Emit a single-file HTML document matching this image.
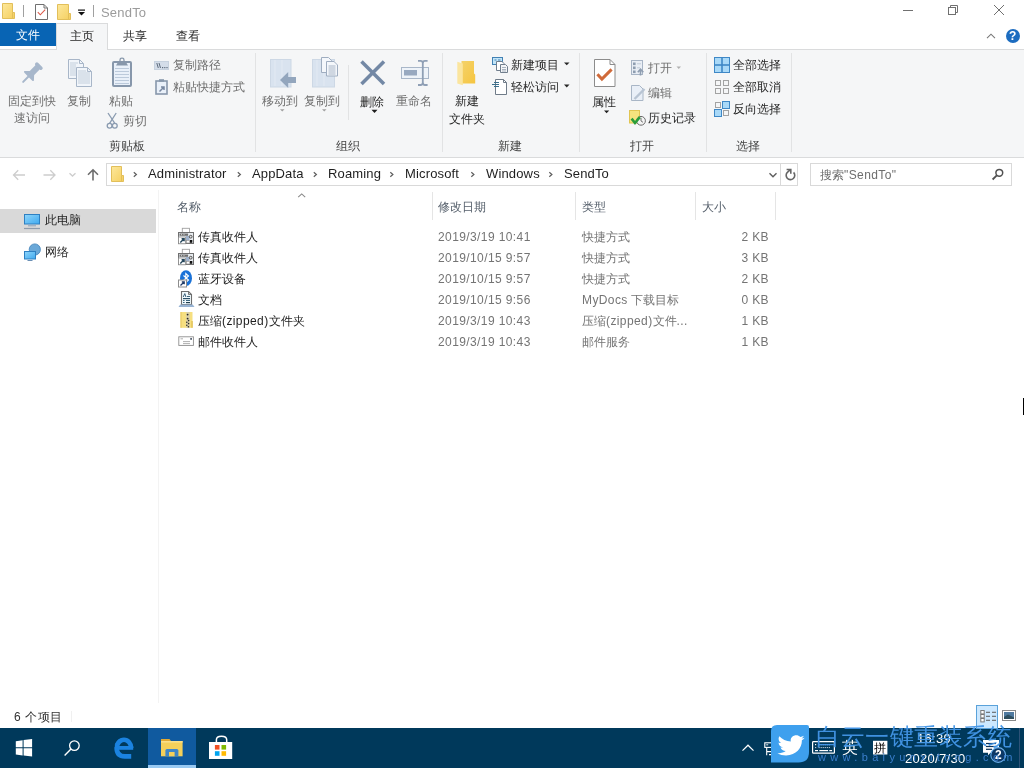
<!DOCTYPE html>
<html><head><meta charset="utf-8">
<style>
html,body{margin:0;padding:0}
body{width:1024px;height:768px;overflow:hidden;position:relative;background:#fff;font-family:"Liberation Sans",sans-serif;font-size:12px;color:#1e1e1e}
.a{position:absolute}
.t{position:absolute;white-space:nowrap;line-height:16px;height:16px}
.g{color:#747474}
.lat{letter-spacing:0.4px}
.g2{color:#6f6f6f}
.addr{font-size:13px;letter-spacing:0.15px;line-height:18px;height:18px}
.d2{color:#262626}
.gl{color:#454545}
svg{position:absolute;overflow:visible}
.t{will-change:transform}
</style></head><body>

<!-- title bar -->
<div class="a" style="left:0;top:0;width:1024px;height:23px;background:#fff"></div>
<div class="t" style="left:101px;top:4px;color:#9b9b9b;font-size:13px;letter-spacing:0.2px;line-height:18px;height:18px">SendTo</div>

<!-- tabs row -->
<div class="a" style="left:0;top:23px;width:56px;height:23px;background:#0864b4"></div>
<div class="t" style="left:16px;top:27px;color:#fff">文件</div>
<div class="t" style="left:123px;top:28px;color:#262626">共享</div>
<div class="t" style="left:176px;top:28px;color:#262626">查看</div>

<!-- ribbon -->
<div class="a" style="left:0;top:49px;width:1024px;height:107px;background:#f5f6f7;border-top:1px solid #dadbdc;border-bottom:1px solid #dadbdc"></div>
<div class="a" style="left:56px;top:23px;width:50px;height:26px;background:#f5f6f7;border:1px solid #dadbdc;border-bottom:none"></div>
<div class="t" style="left:70px;top:28px;color:#262626">主页</div>



<!-- ribbon text -->
<div class="t g2" style="left:8px;top:93px;width:48px;text-align:center">固定到快</div>
<div class="t g2" style="left:8px;top:110px;width:48px;text-align:center">速访问</div>
<div class="t g2" style="left:67px;top:93px">复制</div>
<div class="t g2" style="left:109px;top:93px">粘贴</div>
<div class="t g2" style="left:123px;top:113px">剪切</div>
<div class="t gl" style="left:109px;top:138px">剪贴板</div>
<div class="t g2" style="left:173px;top:57px">复制路径</div>
<div class="t g2" style="left:173px;top:79px">粘贴快捷方式</div>

<div class="t g2" style="left:262px;top:93px">移动到</div>
<div class="t g2" style="left:304px;top:93px">复制到</div>
<div class="t d2" style="left:360px;top:94px">删除</div>
<div class="t g2" style="left:396px;top:93px">重命名</div>
<div class="t gl" style="left:336px;top:138px">组织</div>

<div class="t d2" style="left:455px;top:93px">新建</div>
<div class="t d2" style="left:449px;top:111px">文件夹</div>
<div class="t d2" style="left:511px;top:57px">新建项目</div>
<div class="t d2" style="left:511px;top:79px">轻松访问</div>
<div class="t gl" style="left:498px;top:138px">新建</div>

<div class="t d2" style="left:592px;top:94px">属性</div>
<div class="t g2" style="left:648px;top:60px">打开</div>
<div class="t g2" style="left:648px;top:85px">编辑</div>
<div class="t d2" style="left:648px;top:110px">历史记录</div>
<div class="t gl" style="left:630px;top:138px">打开</div>

<div class="t d2" style="left:733px;top:57px">全部选择</div>
<div class="t d2" style="left:733px;top:79px">全部取消</div>
<div class="t d2" style="left:733px;top:101px">反向选择</div>
<div class="t gl" style="left:736px;top:138px">选择</div>

<!-- ribbon separators -->
<div class="a" style="left:255px;top:53px;width:1px;height:99px;background:#e2e3e4"></div>
<div class="a" style="left:442px;top:53px;width:1px;height:99px;background:#e2e3e4"></div>
<div class="a" style="left:579px;top:53px;width:1px;height:99px;background:#e2e3e4"></div>
<div class="a" style="left:706px;top:53px;width:1px;height:99px;background:#e2e3e4"></div>
<div class="a" style="left:791px;top:53px;width:1px;height:99px;background:#e2e3e4"></div>
<div class="a" style="left:348px;top:65px;width:1px;height:55px;background:#e2e3e4"></div>

<!-- address row -->
<div class="a" style="left:106px;top:163px;width:674px;height:21px;border:1px solid #d9d9d9;background:#fff"></div>
<div class="a" style="left:780px;top:163px;width:16px;height:21px;border:1px solid #d9d9d9;background:#fff"></div>
<div class="a" style="left:810px;top:163px;width:200px;height:21px;border:1px solid #d9d9d9;background:#fff"></div>
<div class="t addr" style="left:148px;top:165px">Administrator</div>
<div class="t addr" style="left:252px;top:165px">AppData</div>
<div class="t addr" style="left:328px;top:165px">Roaming</div>
<div class="t addr" style="left:405px;top:165px">Microsoft</div>
<div class="t addr" style="left:486px;top:165px">Windows</div>
<div class="t addr" style="left:564px;top:165px">SendTo</div>
<div class="t" style="left:820px;top:167px;color:#6d6d6d">搜索<span class="lat">"SendTo"</span></div>

<!-- nav pane -->
<div class="a" style="left:0;top:209px;width:156px;height:24px;background:#d9d9d9"></div>
<div class="t" style="left:45px;top:212px">此电脑</div>
<div class="t" style="left:45px;top:244px">网络</div>
<div class="a" style="left:158px;top:190px;width:1px;height:513px;background:#f3f3f3"></div>

<!-- headers -->
<div class="t" style="left:177px;top:199px;color:#56606c">名称</div>
<div class="t" style="left:438px;top:199px;color:#56606c">修改日期</div>
<div class="t" style="left:582px;top:199px;color:#56606c">类型</div>
<div class="t" style="left:702px;top:199px;color:#56606c">大小</div>
<div class="a" style="left:432px;top:192px;width:1px;height:28px;background:#e5e5e5"></div>
<div class="a" style="left:575px;top:192px;width:1px;height:28px;background:#e5e5e5"></div>
<div class="a" style="left:695px;top:192px;width:1px;height:28px;background:#e5e5e5"></div>
<div class="a" style="left:775px;top:192px;width:1px;height:28px;background:#e5e5e5"></div>

<!-- rows -->
<div id="rows">
<div class="t" style="left:198px;top:229px">传真收件人</div>
<div class="t g lat" style="left:438px;top:229px">2019/3/19 10:41</div>
<div class="t g" style="left:582px;top:229px">快捷方式</div>
<div class="t g lat" style="left:669px;width:100px;text-align:right;top:229px">2 KB</div>
<div class="t" style="left:198px;top:250px">传真收件人</div>
<div class="t g lat" style="left:438px;top:250px">2019/10/15 9:57</div>
<div class="t g" style="left:582px;top:250px">快捷方式</div>
<div class="t g lat" style="left:669px;width:100px;text-align:right;top:250px">3 KB</div>
<div class="t" style="left:198px;top:271px">蓝牙设备</div>
<div class="t g lat" style="left:438px;top:271px">2019/10/15 9:57</div>
<div class="t g" style="left:582px;top:271px">快捷方式</div>
<div class="t g lat" style="left:669px;width:100px;text-align:right;top:271px">2 KB</div>
<div class="t" style="left:198px;top:292px">文档</div>
<div class="t g lat" style="left:438px;top:292px">2019/10/15 9:56</div>
<div class="t g" style="left:582px;top:292px"><span class="lat">MyDocs </span>下载目标</div>
<div class="t g lat" style="left:669px;width:100px;text-align:right;top:292px">0 KB</div>
<div class="t" style="left:198px;top:313px">压缩<span class="lat">(zipped)</span>文件夹</div>
<div class="t g lat" style="left:438px;top:313px">2019/3/19 10:43</div>
<div class="t g" style="left:582px;top:313px">压缩<span class="lat">(zipped)</span>文件<span class="lat">...</span></div>
<div class="t g lat" style="left:669px;width:100px;text-align:right;top:313px">1 KB</div>
<div class="t" style="left:198px;top:334px">邮件收件人</div>
<div class="t g lat" style="left:438px;top:334px">2019/3/19 10:43</div>
<div class="t g" style="left:582px;top:334px">邮件服务</div>
<div class="t g lat" style="left:669px;width:100px;text-align:right;top:334px">1 KB</div>
</div>

<svg width="1024" height="768" style="left:0;top:0">
<defs>
<linearGradient id="fy" x1="0" y1="0" x2="1" y2="1"><stop offset="0" stop-color="#fde89c"/><stop offset="1" stop-color="#f5cf5e"/></linearGradient>
<linearGradient id="fb" x1="0" y1="0" x2="1" y2="1"><stop offset="0" stop-color="#f4d26a"/><stop offset="1" stop-color="#f6c540"/></linearGradient>
<linearGradient id="mon" x1="0" y1="0" x2="1" y2="1"><stop offset="0" stop-color="#8fd6fb"/><stop offset="1" stop-color="#3fa9ef"/></linearGradient>
</defs>
<!-- title bar -->
<g>
 <path d="M2.5,3.5 H12.5 V12.5 H14.5 V18.5 H2.5 Z" fill="url(#fy)" stroke="#e2bf5a"/>
 <line x1="12.5" y1="12.5" x2="12.5" y2="18.5" stroke="#e2bf5a"/>
 <rect x="23" y="5" width="1" height="12" fill="#a0a0a0"/>
 <path d="M35.5,4.5 H44 L47.5,8 V19.5 H35.5 Z" fill="#fff" stroke="#707070"/>
 <path d="M44,4.5 V8 H47.5" fill="none" stroke="#707070"/>
 <polyline points="37.8,12.2 40.3,14.8 45.2,9.6" fill="none" stroke="#dc5a4a" stroke-width="1.1"/>
 <path d="M57.5,4.5 H68.5 V13.5 H70.5 V19.5 H57.5 Z" fill="url(#fy)" stroke="#e2bf5a"/>
 <line x1="68.5" y1="13.5" x2="68.5" y2="19.5" stroke="#e2bf5a"/>
 <rect x="78" y="9.5" width="7" height="1.2" fill="#111"/>
 <path d="M78,12 H85 L81.5,15.6 Z" fill="#111"/>
 <rect x="93" y="5" width="1" height="12" fill="#a0a0a0"/>
 <line x1="903" y1="10.5" x2="913" y2="10.5" stroke="#707070"/>
 <rect x="948.5" y="7.5" width="7" height="7" fill="none" stroke="#707070"/>
 <polyline points="950.5,7.5 950.5,5.5 957.5,5.5 957.5,12.5 955.5,12.5" fill="none" stroke="#707070"/>
 <line x1="994" y1="5" x2="1004" y2="15" stroke="#707070"/>
 <line x1="1004" y1="5" x2="994" y2="15" stroke="#707070"/>
 <polyline points="987,38.2 991,34.2 995,38.2" fill="none" stroke="#777" stroke-width="1.1"/>
 <circle cx="1013" cy="36" r="7" fill="#1c6cc0"/>
</g>
<!-- clipboard group -->
<g transform="translate(32,73) rotate(45)" fill="#a7b7cb">
 <rect x="-4.6" y="-11.5" width="9.2" height="3.6" rx="1.6"/>
 <rect x="-3" y="-8.5" width="6" height="9"/>
 <path d="M-3,0 L3,0 L6.7,4 Q6.9,5.2 5.6,5.2 H-5.6 Q-6.9,5.2 -6.7,4 Z"/>
 <rect x="-1" y="4" width="2" height="9.5" rx="1"/>
</g>
<g stroke="#a8b6c8" fill="#f1f5fa">
 <path d="M68.5,59.5 H79.5 L83.5,63.5 V78.5 H68.5 Z"/>
 <path d="M79.5,59.5 V63.5 H83.5" fill="none"/>
 <path d="M76.5,67.5 H87.5 L91.5,71.5 V86.5 H76.5 Z"/>
 <path d="M87.5,67.5 V71.5 H91.5" fill="none"/>
</g>
<g stroke="#c3cfdc" stroke-width="1">
 <line x1="70" y1="63" x2="78" y2="63"/><line x1="70" y1="65" x2="76" y2="65"/><line x1="70" y1="67" x2="76" y2="67"/><line x1="70" y1="69" x2="76" y2="69"/><line x1="70" y1="71" x2="76" y2="71"/><line x1="70" y1="73" x2="76" y2="73"/><line x1="70" y1="75" x2="76" y2="75"/>
 <line x1="78" y1="71" x2="86" y2="71"/><line x1="78" y1="73" x2="90" y2="73"/><line x1="78" y1="75" x2="90" y2="75"/><line x1="78" y1="77" x2="90" y2="77"/><line x1="78" y1="79" x2="90" y2="79"/><line x1="78" y1="81" x2="90" y2="81"/><line x1="78" y1="83" x2="90" y2="83"/>
</g>
<rect x="113" y="62" width="18" height="24" rx="1" fill="#e9f0f9" stroke="#8797ab" stroke-width="2"/>
<g stroke="#bccadb"><line x1="115" y1="68.5" x2="129" y2="68.5"/><line x1="115" y1="71.5" x2="129" y2="71.5"/><line x1="115" y1="74.5" x2="129" y2="74.5"/><line x1="115" y1="77.5" x2="129" y2="77.5"/><line x1="115" y1="80.5" x2="129" y2="80.5"/><line x1="115" y1="83.5" x2="129" y2="83.5"/></g>
<path d="M116,65.5 L118,62 H126 L128,65.5 Z" fill="#8797ab"/>
<rect x="120" y="58.2" width="4" height="4.5" rx="1.8" fill="none" stroke="#8797ab" stroke-width="1.3"/>
<g stroke="#8a9bb0" stroke-width="1.3" fill="none">
 <line x1="108" y1="113" x2="114.8" y2="123.3"/><line x1="116.2" y1="113" x2="109.6" y2="123.3"/>
 <circle cx="109.6" cy="125.8" r="2.4"/><circle cx="114.8" cy="125.8" r="2.4"/>
</g>
<rect x="154.5" y="61.5" width="14" height="8" fill="#d4dde9" stroke="#c6d1de"/>
<g stroke="#5d6b7c" stroke-width="1"><line x1="156.8" y1="63" x2="158.3" y2="68"/><line x1="159" y1="63" x2="160.5" y2="68"/></g>
<g fill="#5d6b7c"><rect x="162" y="67" width="1.2" height="1.2"/><rect x="164.2" y="67" width="1.2" height="1.2"/><rect x="166.4" y="67" width="1.2" height="1.2"/></g>
<rect x="156" y="81" width="11" height="13" fill="#e9f0f9" stroke="#8797ab" stroke-width="1.6"/>
<rect x="159" y="79.2" width="5" height="2.5" fill="#8797ab"/>
<path d="M159.5,91.5 L163.5,87.5 M161,87 H164 V90" fill="none" stroke="#7787a0" stroke-width="1.5"/>
<!-- organize -->
<rect x="270.5" y="59.5" width="20.5" height="27.5" fill="#d9e3ef" stroke="#cdd8e5"/>
<g stroke="#e3eaf3"><line x1="275" y1="60" x2="275" y2="86"/><line x1="282" y1="60" x2="282" y2="86"/></g>
<path d="M280,80 L288.2,72 V77 H296 V83 H288.2 V88 Z" fill="#93a6bd"/>
<path d="M280,109.2 H284.5 L282.25,111.6 Z" fill="#a0a0a0"/>
<rect x="312.5" y="59.5" width="22" height="27.5" fill="#d9e3ef" stroke="#cdd8e5"/>
<g stroke="#e3eaf3"><line x1="317" y1="60" x2="317" y2="86"/><line x1="324" y1="60" x2="324" y2="86"/></g>
<g stroke="#9fadc0" fill="#f4f7fb">
 <path d="M321.5,57.5 H328.5 L331.5,60.5 V72.5 H321.5 Z"/>
 <path d="M326.5,61.5 H334 L337.5,65 V76 H326.5 Z"/>
</g>
<g stroke="#aab7c8"><line x1="328.5" y1="66" x2="335.5" y2="66"/><line x1="328.5" y1="68" x2="335.5" y2="68"/><line x1="328.5" y1="70" x2="335.5" y2="70"/><line x1="328.5" y1="72" x2="335.5" y2="72"/><line x1="328.5" y1="74" x2="335.5" y2="74"/></g>
<path d="M322,109.2 H326.5 L324.25,111.6 Z" fill="#a0a0a0"/>
<g stroke="#7388a5" stroke-width="3.6"><line x1="361.5" y1="61.5" x2="384" y2="84"/><line x1="384" y1="61.5" x2="361.5" y2="84"/></g>
<path d="M371.5,109.8 H377.5 L374.5,113 Z" fill="#1e1e1e"/>
<rect x="401.5" y="67.5" width="27" height="11" fill="#eef3f9" stroke="#a9b7c9"/>
<rect x="404" y="70" width="13" height="5.5" fill="#98a9c0"/>
<g stroke="#8f9fb5" stroke-width="1.8" fill="none">
 <line x1="422.8" y1="62" x2="422.8" y2="84"/>
 <path d="M418,60.8 H420.5 Q422.8,60.8 422.8,63 Q422.8,60.8 425,60.8 H427.6"/>
 <path d="M418,85 H420.5 Q422.8,85 422.8,82.8 Q422.8,85 425,85 H427.6"/>
</g>
<!-- new -->
<path d="M461.5,61 H474 V73.5 L475.2,74.5 V83.5 H461.5 Z" fill="url(#fb)"/>
<path d="M457.3,61.8 L462.8,63.5 V85.2 L457.3,83.6 Z" fill="#fbe59e"/>
<rect x="492.5" y="57.5" width="10" height="7" fill="#c2e5f8" stroke="#4281b4"/>
<g stroke="#4281b4"><line x1="494.5" y1="60" x2="496.5" y2="60"/><line x1="498" y1="60" x2="500.5" y2="60"/></g>
<path d="M496.5,61.5 H502 L504,63.5 V70.5 H496.5 Z" fill="#fff" stroke="#717e8d"/>
<path d="M500.5,64.5 H505.5 L507.5,66.5 V72.5 H500.5 Z" fill="#f4f6f8" stroke="#717e8d"/>
<g stroke="#a9b3bf"><line x1="502" y1="67.5" x2="506" y2="67.5"/><line x1="502" y1="69.5" x2="506" y2="69.5"/><line x1="502" y1="71" x2="506" y2="71"/></g>
<path d="M495.5,79.5 H503.5 L506.5,82.5 V94.5 H495.5 Z" fill="#fff" stroke="#6f7b88"/>
<path d="M503.5,79.5 V82.5 H506.5" fill="none" stroke="#6f7b88"/>
<g stroke="#3b6f8c" stroke-width="1"><line x1="494" y1="82.5" x2="499" y2="82.5"/><line x1="492" y1="84.5" x2="499" y2="84.5"/><line x1="494" y1="86.5" x2="499" y2="86.5"/></g>
<path d="M564,62.5 H569.5 L566.75,65.3 Z" fill="#262626"/>
<path d="M564,84.6 H569.5 L566.75,87.4 Z" fill="#262626"/>
<!-- open -->
<path d="M594.5,59.5 H610 L615,64.5 V86.5 H594.5 Z" fill="#fff" stroke="#8c8c8c"/>
<path d="M610,59.5 V64.5 H615" fill="none" stroke="#8c8c8c"/>
<polyline points="597.4,74.3 601.9,79 611.6,69.4" fill="none" stroke="#d06a3a" stroke-width="3"/>
<path d="M604,110.6 H609.2 L606.6,113.3 Z" fill="#1e1e1e"/>
<rect x="631.5" y="60.5" width="11" height="14" fill="#e9eef5" stroke="#a7b4c5"/>
<g fill="#8e9db0"><rect x="633" y="62.5" width="2.6" height="2.6"/><rect x="633" y="66.5" width="2.6" height="2.6"/><rect x="633" y="70.5" width="2.6" height="2.6"/></g>
<g stroke="#bfcad8"><line x1="637" y1="63.8" x2="641" y2="63.8"/><line x1="637" y1="67.8" x2="640" y2="67.8"/></g>
<path d="M640.5,75.5 V70 M637.8,72.2 L640.5,69.2 L643.3,72.2" fill="none" stroke="#8e9db0" stroke-width="1.6"/>
<path d="M676.5,66.6 H681 L678.75,68.9 Z" fill="#b0b0b0"/>
<path d="M631.5,85.5 H639.5 L643,89 V100.5 H631.5 Z" fill="#e9eff7" stroke="#a9b6c6"/>
<line x1="634.5" y1="99" x2="644.5" y2="89" stroke="#b8c4d3" stroke-width="2.4"/>
<rect x="629.5" y="110.5" width="10" height="12.5" fill="#f6e37e" stroke="#e1c552"/>
<circle cx="641" cy="120.8" r="4.4" fill="#f4f4f4" stroke="#6a6a6a"/>
<path d="M641,117.8 V121 L643,122.3" fill="none" stroke="#555" stroke-width="0.8"/>
<polyline points="631.6,118.6 635,123 639.8,117.2" fill="none" stroke="#2a9d3a" stroke-width="2.6"/>
<!-- select -->
<rect x="714.5" y="57.5" width="15" height="15" fill="#a9d9f8" stroke="#3f88c6"/>
<line x1="722" y1="57.5" x2="722" y2="72.5" stroke="#3f88c6" stroke-width="1.6"/>
<line x1="714.5" y1="65" x2="729.5" y2="65" stroke="#3f88c6" stroke-width="1.6"/>
<g fill="none" stroke="#a3a3a3">
 <rect x="715.5" y="80.5" width="5" height="5"/><rect x="723.5" y="80.5" width="5" height="5"/>
 <rect x="715.5" y="88.5" width="5" height="5"/><rect x="723.5" y="88.5" width="5" height="5"/>
 <rect x="715.5" y="102.5" width="5" height="5"/><rect x="723.5" y="110.5" width="5" height="5"/>
</g>
<g fill="#a9d9f8" stroke="#3f88c6"><rect x="722.5" y="101.5" width="7" height="7"/><rect x="714.5" y="109.5" width="7" height="7"/></g>
<!-- address -->
<g fill="none" stroke="#cdcdcd" stroke-width="1.3">
 <path d="M13.5,175 H25 M18.2,170.3 L13.5,175 L18.2,179.7"/>
 <path d="M43.5,175 H55 M50.3,170.3 L55,175 L50.3,179.7"/>
 <polyline points="69.5,173.2 72.5,176 75.5,173.2"/>
</g>
<path d="M93,169.8 V180.5 M88,174.8 L93,169.8 L98,174.8" fill="none" stroke="#6d6d6d" stroke-width="1.6"/>
<path d="M111.5,166.5 H121.5 V175.5 H123.5 V181.5 H111.5 Z" fill="url(#fy)" stroke="#e2bf5a"/>
<line x1="121.5" y1="175.5" x2="121.5" y2="181.5" stroke="#e2bf5a"/>
<g fill="none" stroke="#5e5e5e" stroke-width="1.2">
 <polyline points="133.8,172.2 136.4,174.5 133.8,176.8"/>
 <polyline points="237.8,172.2 240.4,174.5 237.8,176.8"/>
 <polyline points="313.8,172.2 316.4,174.5 313.8,176.8"/>
 <polyline points="390.3,172.2 392.9,174.5 390.3,176.8"/>
 <polyline points="471.3,172.2 473.9,174.5 471.3,176.8"/>
 <polyline points="549.3,172.2 551.9,174.5 549.3,176.8"/>
 <polyline points="769.5,173.3 773,176.8 776.5,173.3" stroke-width="1.4"/>
</g>
<path d="M793.6,172.4 A4.3,4.3 0 1 1 787.6,172.1 L790.3,169.6" fill="none" stroke="#666" stroke-width="1.6"/>
<path d="M786.6,169.5 H790.8 V173.7" fill="none" stroke="#666" stroke-width="1.6"/>
<circle cx="999.3" cy="172.8" r="3.4" fill="none" stroke="#505050" stroke-width="1.5"/>
<line x1="996.8" y1="175.3" x2="992.6" y2="179.5" stroke="#505050" stroke-width="1.8"/>
<!-- nav -->
<rect x="24.5" y="214.5" width="15" height="9.5" fill="url(#mon)" stroke="#2e80c2"/>
<line x1="28" y1="225.8" x2="36" y2="225.8" stroke="#8da2b8" stroke-width="1"/>
<line x1="24" y1="228.5" x2="40" y2="228.5" stroke="#8f9cac" stroke-width="1.2"/>
<circle cx="34.8" cy="249.5" r="5.6" fill="#6aa8d8" stroke="#3c7fb8" stroke-width="0.8"/>
<rect x="24.5" y="251.5" width="11" height="7.5" fill="url(#mon)" stroke="#2e80c2"/>
<line x1="27.5" y1="260.5" x2="32.5" y2="260.5" stroke="#6a8fb5"/>
<!-- header chevron -->
<polyline points="298.2,197.2 301.7,193.9 305.2,197.2" fill="none" stroke="#8a8a8a" stroke-width="1.1"/>
</svg>

<!-- status -->
<div class="t" style="left:14px;top:709px;color:#333;letter-spacing:0.6px">6 个项目</div>
<div class="a" style="left:71px;top:711px;width:1px;height:11px;background:#f0f0f0"></div>

<!-- taskbar -->
<div class="a" style="left:0;top:728px;width:1024px;height:40px;background:#00395b"></div>
<div class="a" style="left:148px;top:728px;width:48px;height:40px;background:#105a9f"></div>
<div class="a" style="left:148px;top:765px;width:48px;height:3px;background:#99c9f2"></div>

<svg width="1024" height="768" style="left:0;top:0">

<g>
 <rect x="182.3" y="228.3" width="7.2" height="4.2" fill="#fff" stroke="#a0a0a0" stroke-width="0.9"/>
 <rect x="178.5" y="232.5" width="15" height="11" fill="#e8ecf0" stroke="#707070"/>
 <rect x="179.5" y="233.5" width="8.6" height="2.3" fill="#6e6e6e"/>
 <rect x="181" y="234.2" width="1" height="1" fill="#ddd"/><rect x="183.5" y="234.2" width="1" height="1" fill="#ddd"/>
 <rect x="186" y="236" width="3.5" height="4" fill="#9fb2cc"/>
 <circle cx="190.7" cy="236.7" r="1.4" fill="#e0e0e0" stroke="#444" stroke-width="0.9"/>
 <rect x="186.6" y="240.4" width="2.8" height="2.6" fill="#fff" stroke="#8a8a8a" stroke-width="0.6"/>
 <rect x="190" y="240" width="2.3" height="2.8" fill="#111"/>
 <rect x="178.5" y="237" width="7" height="6.8" fill="#fff" stroke="#8a8a8a" stroke-width="0.8"/>
 <path d="M180.3,242.6 L183.8,239.1 M181.6,238.8 H184.1 V241.3" fill="none" stroke="#26475c" stroke-width="1.4"/>
</g>
<g transform="translate(0,21)">
 <rect x="182.3" y="228.3" width="7.2" height="4.2" fill="#fff" stroke="#a0a0a0" stroke-width="0.9"/>
 <rect x="178.5" y="232.5" width="15" height="11" fill="#e8ecf0" stroke="#707070"/>
 <rect x="179.5" y="233.5" width="8.6" height="2.3" fill="#6e6e6e"/>
 <rect x="181" y="234.2" width="1" height="1" fill="#ddd"/><rect x="183.5" y="234.2" width="1" height="1" fill="#ddd"/>
 <rect x="186" y="236" width="3.5" height="4" fill="#9fb2cc"/>
 <circle cx="190.7" cy="236.7" r="1.4" fill="#e0e0e0" stroke="#444" stroke-width="0.9"/>
 <rect x="186.6" y="240.4" width="2.8" height="2.6" fill="#fff" stroke="#8a8a8a" stroke-width="0.6"/>
 <rect x="190" y="240" width="2.3" height="2.8" fill="#111"/>
 <rect x="178.5" y="237" width="7" height="6.8" fill="#fff" stroke="#8a8a8a" stroke-width="0.8"/>
 <path d="M180.3,242.6 L183.8,239.1 M181.6,238.8 H184.1 V241.3" fill="none" stroke="#26475c" stroke-width="1.4"/>
</g>
<ellipse cx="186" cy="278.2" rx="6" ry="7.9" fill="#1a72d8"/>
<path d="M183.5,275.5 L188.5,280 L185.8,282.5 V273.5 L188.5,276 L183.5,280.5" fill="none" stroke="#fff" stroke-width="1.1"/>
<g transform="translate(178,279.5)">
 <rect x="0.5" y="0.5" width="8" height="7" fill="#fff" stroke="#8d8d8d"/>
 <path d="M2.5,6 L6,2.5 M3.8,2.3 H6.2 V4.7" fill="none" stroke="#1f3a66" stroke-width="1.3"/>
</g>
<path d="M181.5,291.5 H188.5 L191.5,294.5 V304.5 H181.5 Z" fill="#f0f9fc" stroke="#6d6d6d" stroke-width="1.1"/>
<path d="M188.5,291.5 V294.5 H191.5" fill="none" stroke="#6d6d6d" stroke-width="0.9"/>
<path d="M183.2,297 L184.8,293.6 L185.9,297" fill="none" stroke="#3a5f78" stroke-width="1"/>
<g fill="#3d6780"><rect x="187" y="296" width="3" height="1"/><rect x="183" y="298" width="7" height="1.2" fill="#2b4f66"/><rect x="183" y="300" width="1.6" height="1"/><rect x="186" y="300" width="4" height="1"/><rect x="183" y="302" width="1.6" height="1"/><rect x="186" y="302" width="4" height="1.2" fill="#23404f"/></g>
<path d="M180.2,304.6 H192.8 L194.5,306.9 H178.5 Z" fill="#97b3d3"/>
<rect x="180.5" y="312" width="12" height="15.8" fill="#f6df80"/>
<rect x="180.5" y="312" width="1" height="15.8" fill="#e8c860"/>
<rect x="186.3" y="312" width="3.4" height="15.8" fill="#d9cfa8"/>
<rect x="191.4" y="321" width="1.3" height="6.8" fill="#e0bf50"/>
<g fill="#2a2a2a"><circle cx="187.6" cy="314.6" r="0.9"/><circle cx="187.6" cy="318.6" r="0.9"/><circle cx="188.6" cy="320.6" r="0.8"/><circle cx="186.8" cy="322.2" r="0.8"/><circle cx="188.6" cy="323.6" r="0.8"/><circle cx="186.8" cy="325.2" r="0.8"/><circle cx="188.4" cy="326.8" r="0.8"/></g>
<rect x="178.8" y="336.8" width="14.6" height="8.6" fill="#fff" stroke="#8e8e8e" stroke-width="0.9"/>
<g stroke="#9a9a9a" stroke-width="0.8"><line x1="180.5" y1="338.8" x2="183" y2="338.8"/><line x1="183" y1="341.6" x2="190" y2="341.6"/><line x1="183" y1="343.6" x2="190" y2="343.6"/></g>
<rect x="190.2" y="338" width="1.8" height="1.8" fill="#5a6575"/>
<!-- status view buttons -->
<rect x="976.5" y="705.5" width="21" height="23" fill="#cce8ff" stroke="#5aa2da"/>
<g fill="#fff" stroke="#7a7a7a"><rect x="980.8" y="710.5" width="3.4" height="3.4"/><rect x="980.8" y="714.5" width="3.4" height="3.4"/><rect x="980.8" y="718.5" width="3.4" height="3.4"/></g>
<g stroke="#666" stroke-width="1.1"><line x1="986" y1="712.3" x2="990" y2="712.3"/><line x1="992" y1="712.3" x2="996" y2="712.3"/><line x1="986" y1="716.3" x2="990" y2="716.3"/><line x1="992" y1="716.3" x2="996" y2="716.3"/><line x1="986" y1="720.3" x2="990" y2="720.3"/><line x1="992" y1="720.3" x2="996" y2="720.3"/></g>
<rect x="1002.5" y="710.5" width="13" height="10" fill="#fff" stroke="#8a8a8a"/>
<rect x="1004" y="712" width="10" height="7" fill="#4f7aa0"/>
<path d="M1004,717 L1008,714.5 L1014,717.5 V719 H1004 Z" fill="#2f4f5f"/>
<!-- taskbar -->
<g fill="#fff">
 <path d="M15.8,741.2 L22.6,740.2 V747.3 H15.8 Z"/>
 <path d="M23.6,740.1 L32.1,738.9 V747.3 H23.6 Z"/>
 <path d="M15.8,748.3 H22.6 V755.4 L15.8,754.5 Z"/>
 <path d="M23.6,748.3 H32.1 V756.5 L23.6,755.5 Z"/>
</g>
<circle cx="74.4" cy="745.6" r="4.8" fill="none" stroke="#fff" stroke-width="1.3"/>
<line x1="71" y1="749.1" x2="64.6" y2="755.6" stroke="#fff" stroke-width="1.4"/>
<path d="M116.8,748 A7.2,8.2 0 0 1 131.2,748" fill="none" stroke="#1b83e0" stroke-width="4.6"/>
<path d="M116.6,747.5 Q116.6,756.4 124.8,756.4 H131.2" fill="none" stroke="#1b83e0" stroke-width="4.6"/>
<rect x="116" y="746" width="17.2" height="3.8" fill="#1b83e0"/>
<path d="M114.5,745.5 Q116,740 121,738.5 L118,743 Z" fill="#1b83e0"/>
<path d="M161,741 H182.6 V756.3 H161 Z" fill="#f5d05a"/>
<path d="M161,739 H169.5 L171,741 H161 Z" fill="#e2a932"/>
<rect x="161" y="741" width="21.6" height="1.6" fill="#fbe08a"/>
<path d="M165.4,756.3 V750.5 Q165.4,749 167,749 H176.8 Q178.4,749 178.4,750.5 V756.3 Z" fill="#3f86c8"/>
<rect x="169" y="752" width="5.6" height="4.3" fill="#f5d05a"/>
<path d="M216.4,742 V739.8 Q216.4,736.3 221.5,736.3 Q226.7,736.3 226.7,739.8 V742" fill="none" stroke="#fff" stroke-width="1.5"/>
<rect x="209" y="742" width="23.2" height="17" fill="#fff"/>
<rect x="214.9" y="745" width="4.6" height="4.6" fill="#f25022"/>
<rect x="221.5" y="745" width="4.6" height="4.6" fill="#7fba00"/>
<rect x="214.9" y="751.2" width="4.6" height="4.6" fill="#00a4ef"/>
<rect x="221.5" y="751.2" width="4.6" height="4.6" fill="#ffb900"/>
<polyline points="742.5,750.6 748,745.2 753.5,750.6" fill="none" stroke="#fff" stroke-width="1.2"/>
<g fill="none" stroke="#fff" stroke-width="1.1"><rect x="764.8" y="742.8" width="8" height="4.6"/><path d="M766.7,747.5 V755.2 M766.7,751.6 H772 M769,754.6 H772"/></g><rect x="766.2" y="744.2" width="2" height="1.2" fill="#fff" opacity="0.8"/>
<rect x="812.6" y="741.6" width="21.8" height="11.6" rx="0.8" fill="none" stroke="#fff" stroke-width="1.2"/>
<g fill="#fff"><rect x="815.00" y="744" width="1.2" height="1.2"/><rect x="818.55" y="744" width="1.2" height="1.2"/><rect x="820.60" y="744" width="1.2" height="1.2"/><rect x="822.65" y="744" width="1.2" height="1.2"/><rect x="824.70" y="744" width="1.2" height="1.2"/><rect x="826.75" y="744" width="1.2" height="1.2"/><rect x="828.80" y="744" width="1.2" height="1.2"/><rect x="815.00" y="747" width="1.2" height="1.1" opacity="0.7"/><rect x="818.55" y="747" width="1.2" height="1.1" opacity="0.7"/><rect x="820.60" y="747" width="1.2" height="1.1" opacity="0.7"/><rect x="822.65" y="747" width="1.2" height="1.1" opacity="0.7"/><rect x="824.70" y="747" width="1.2" height="1.1" opacity="0.7"/><rect x="826.75" y="747" width="1.2" height="1.1" opacity="0.7"/><rect x="828.80" y="747" width="1.2" height="1.1" opacity="0.7"/><rect x="815" y="750" width="3" height="1.2"/><rect x="819.3" y="750" width="8.8" height="1.2"/><rect x="829.3" y="750" width="2.8" height="1.2"/></g>
<rect x="873" y="740.8" width="14.4" height="13.7" fill="#fff"/>
<path d="M983,740 H999 V752.8 H990.5 L988,755.2 V752.8 H983 Z" fill="#fff"/>
<g stroke="#0b2f55" stroke-width="1.2"><line x1="986" y1="743.5" x2="996" y2="743.5"/><line x1="986" y1="746.5" x2="996" y2="746.5"/><line x1="986" y1="749.3" x2="992" y2="749.3"/></g>
<circle cx="998.2" cy="755" r="7.4" fill="#0c3866" stroke="#6aaeea" stroke-width="1.1"/>
<rect x="1019" y="728" width="1" height="40" fill="#2d5277"/>
<!-- twitter tile -->
<path d="M777,725 H807 Q809,725 809,727 V752 Q809,762.5 798.5,762.5 H771 V731 Q771,725 777,725 Z" fill="#3ea0ee"/>
<path transform="translate(777.5,733) scale(1.13,1.03)" fill="#fff" d="M23.954 4.569c-.885.389-1.83.654-2.825.775 1.014-.611 1.794-1.574 2.163-2.723-.951.555-2.005.959-3.127 1.184-.896-.959-2.173-1.559-3.591-1.559-2.717 0-4.92 2.203-4.92 4.917 0 .39.045.765.127 1.124C7.691 8.094 4.066 6.13 1.64 3.161c-.427.722-.666 1.561-.666 2.475 0 1.71.87 3.213 2.188 4.096-.807-.026-1.566-.248-2.228-.616v.061c0 2.385 1.693 4.374 3.946 4.827-.413.111-.849.171-1.296.171-.314 0-.615-.03-.916-.086.631 1.953 2.445 3.377 4.604 3.417-1.68 1.319-3.809 2.105-6.102 2.105-.39 0-.779-.023-1.17-.067 2.189 1.394 4.768 2.209 7.557 2.209 9.054 0 13.999-7.496 13.999-13.986 0-.209 0-.42-.015-.63.961-.689 1.8-1.56 2.46-2.548l-.047-.02z"/>
<rect x="1023" y="398" width="1" height="17" fill="#000"/>
</svg>

<div class="t" style="left:842px;top:738px;color:#fff;font-size:16px;line-height:20px;height:20px">英</div>
<div class="t" style="left:874px;top:740px;color:#000;font-size:12px">拼</div>
<div class="t" style="left:917px;top:731px;color:#fff;font-size:13px;letter-spacing:0.3px">16:39</div>
<div class="t" style="left:905px;top:751px;color:#fff;font-size:13px;letter-spacing:0.3px">2020/7/30</div>
<div class="t" style="left:994.5px;top:747px;color:#fff;font-size:12px;font-weight:bold">2</div>
<div class="t" style="left:1009px;top:28px;color:#fff;font-size:12px;font-weight:bold">?</div>
<div class="t" style="left:816px;top:722px;color:rgba(66,150,232,0.95);font-size:24px;font-weight:500;line-height:30px;height:30px;letter-spacing:0.5px">白云一键重装系统</div>
<div class="t" style="left:818px;top:749px;color:rgba(60,130,210,0.95);font-size:11px;letter-spacing:4.35px">www.baiyunxitong.com</div>

</body></html>
